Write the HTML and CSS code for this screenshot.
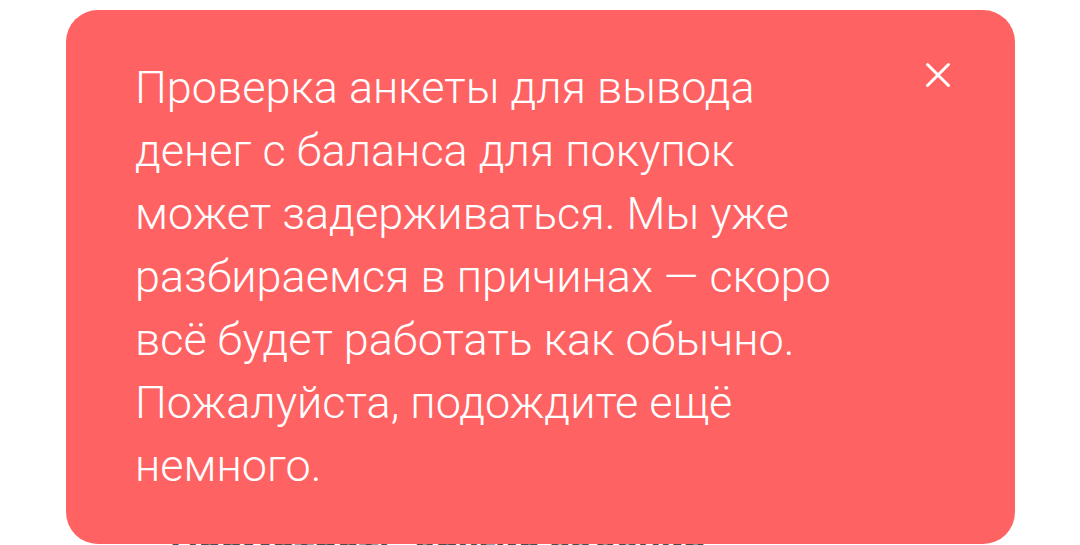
FILE: index.html
```html
<!DOCTYPE html>
<html lang="ru">
<head>
<meta charset="utf-8">
<link rel="stylesheet" href="styles.css">
</head>
<body>
<div class="page">
  <div class="notice">
    <p class="notice-text">Проверка анкеты для вывода денег с баланса для покупок может задерживаться. Мы уже разбираемся в причинах — скоро всё будет работать как обычно. Пожалуйста, подождите ещё немного.</p>
    <button class="close" aria-label="Закрыть">
      <svg width="28" height="28" viewBox="0 0 28 28"><path d="M3.5 3.5L24.5 24.5M24.5 3.5L3.5 24.5" stroke="#fff" stroke-width="3" stroke-linecap="round" fill="none"/></svg>
    </button>
  </div>
  <div class="below">Посмотреть другие задания</div>
</div>
</body>
</html>
```
FILE: styles.css
```css
html, body {
  margin: 0;
  padding: 0;
  background: #fff;
  overflow: hidden;
}
.page {
  padding: 10px 65px 0 66px;
  font-family: Roboto, "Noto Sans", sans-serif;
}
.notice {
  position: relative;
  z-index: 1;
  background: #ff6262;
  border-radius: 32px;
  display: flex;
  justify-content: space-between;
  align-items: flex-start;
  padding: 46px 63px 46px 69px;
  height: 534px;
  box-sizing: border-box;
}
.notice-text {
  margin: 0;
  color: #fff;
  font-weight: 300;
  font-size: 45px;
  line-height: 63px;
  width: 715px;
}
.close {
  background: none;
  border: 0;
  padding: 0;
  margin-top: 5px;
  width: 28px;
  height: 28px;
  cursor: pointer;
}
.below {
  margin-top: -15px;
  padding-left: 104px;
  font-size: 40px;
  font-weight: 700;
  color: #4a4a4a;
  line-height: 40px;
}
```
